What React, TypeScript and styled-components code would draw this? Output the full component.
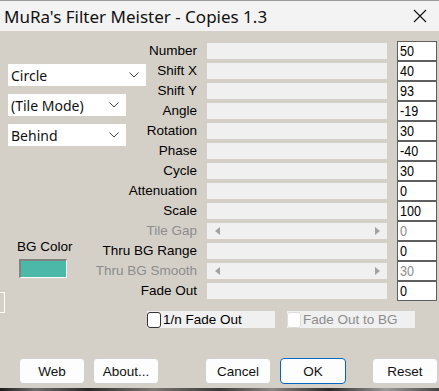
import React from "react";
import styled, { createGlobalStyle } from "styled-components";

const Global = createGlobalStyle`
  html, body { margin: 0; padding: 0; background: #d4d0c8; }
  body { font-family: "Liberation Sans", Arial, sans-serif; }
  * { box-sizing: border-box; }
`;

const Window = styled.div`
  width: 439px;
  height: 391px;
  overflow: hidden;
  display: flex;
  flex-direction: column;
  background: #d4d0c8;
`;

const TitleBar = styled.div`
  height: 31px;
  flex: none;
  background: #f3f3f3;
  display: flex;
  align-items: center;
  justify-content: space-between;
  padding: 0 12px 0 4px;
  border-top: 1px solid #9a9a9a;
`;

const Title = styled.div`
  font-family: "Noto Sans", "Open Sans", sans-serif;
  font-size: 17px;
  color: #111;
`;

const Body = styled.div`
  flex: 1;
  display: flex;
  flex-direction: column;
  padding-top: 10px;
`;

const MainGrid = styled.div`
  display: grid;
  grid-template-columns: 197px 180px 40px;
  grid-template-rows: repeat(13, 20px);
  column-gap: 10px;
`;

const LeftPanel = styled.div`
  grid-column: 1;
  grid-row: 1 / span 13;
  justify-self: start;
  align-self: start;
  display: flex;
  flex-direction: column;
  padding: 23px 0 0 8px;
  & > * { flex-shrink: 0; }
`;

const SelectBox = styled.div<{ $w: number }>`
  width: ${(p) => p.$w}px;
  height: 22px;
  margin-bottom: 8px;
  background: #ffffff;
  display: flex;
  align-items: center;
  justify-content: space-between;
  padding: 0 7px 0 3px;
  font-family: "Noto Sans", "Open Sans", sans-serif;
  font-size: 14px;
  color: #111;
`;

const Chevron = () => (
  <svg width="10" height="6" viewBox="0 0 10 6">
    <path d="M0.5 0.5 L5 5 L9.5 0.5" fill="none" stroke="#444" strokeWidth="1" />
  </svg>
);

const BgColorLabel = styled.div`
  margin: 85px 0 0 9px;
  font-size: 13.5px;
  color: #000;
  line-height: 16px;
`;

const Swatch = styled.div<{ $color: string }>`
  margin: 4px 0 0 11px;
  width: 48px;
  height: 19px;
  background: ${(p) => p.$color};
  border-top: 2px solid #7f8482;
  border-left: 2px solid #7f8482;
  border-right: 1px solid #ffffff;
  border-bottom: 1px solid #ffffff;
`;

const ClippedControl = styled.div`
  margin: 14px 0 0 -10px;
  width: 7px;
  height: 21px;
  border: 1px solid #ffffff;
  border-left: none;
`;

const Label = styled.div<{ $disabled?: boolean; $row: number }>`
  grid-column: 1;
  grid-row: ${(p) => p.$row};
  justify-self: end;
  align-self: center;
  white-space: nowrap;
  font-size: 13.5px;
  line-height: 16px;
  color: ${(p) => (p.$disabled ? "#8c8c8c" : "#000")};
`;

const Track = styled.div<{ $row: number }>`
  grid-column: 2;
  grid-row: ${(p) => p.$row};
  height: 16px;
  align-self: center;
  background: #f0f0f0;
  display: flex;
  align-items: center;
  justify-content: space-between;
  padding: 0 7px 0 8px;
`;

const ArrowL = () => (
  <svg width="5" height="8" viewBox="0 0 5 8">
    <path d="M5 0 L0 4 L5 8 Z" fill="#a2a2a2" />
  </svg>
);
const ArrowR = () => (
  <svg width="5" height="8" viewBox="0 0 5 8">
    <path d="M0 0 L5 4 L0 8 Z" fill="#a2a2a2" />
  </svg>
);

const ValueBox = styled.div<{ $disabled?: boolean; $row: number }>`
  grid-column: 3;
  grid-row: ${(p) => p.$row};
  height: 20px;
  background: #ffffff;
  border: 1px solid #5f5f5f;
  padding: 1px 0 0 2px;
  font-size: 14px;
  line-height: 17px;
  color: ${(p) => (p.$disabled ? "#8c8c8c" : "#000")};
`;

const ValueText = styled.span`
  display: inline-block;
  transform: scaleX(0.9);
  transform-origin: left;
`;

const CheckRow = styled.div`
  display: flex;
  gap: 12px;
  padding-left: 147px;
  margin-top: 10px;
`;

const CheckItem = styled.div<{ $disabled?: boolean }>`
  width: 128px;
  height: 17px;
  background: #f0f0f0;
  display: flex;
  align-items: center;
  gap: 2px;
  font-size: 13.5px;
  color: ${(p) => (p.$disabled ? "#8c8c8c" : "#000")};
`;

const CheckSquare = styled.div<{ $disabled?: boolean }>`
  width: 14px;
  height: 16px;
  border-radius: 3px;
  background: #fff;
  border: 1px solid ${(p) => (p.$disabled ? "#dcdcdc" : "#333")};
`;

const ButtonRow = styled.div`
  display: flex;
  padding-left: 19px;
  margin-top: 30px;
`;

const Btn = styled.div<{ $ml?: number; $primary?: boolean }>`
  margin-left: ${(p) => p.$ml ?? 0}px;
  width: 66px;
  height: 26px;
  border-radius: 4px;
  background: #fdfdfd;
  border: 1px solid ${(p) => (p.$primary ? "#0067c0" : "#d0d0d0")};
  display: flex;
  align-items: center;
  justify-content: center;
  font-size: 13.5px;
  color: #111;
`;

const Desktop = styled.div`
  margin-top: auto;
  height: 3px;
  background: linear-gradient(90deg, #1c1c1c 0%, #6b6b6b 8%, #2a2a2a 20%, #7a7670 35%, #3a3a3a 50%, #8a8580 62%, #2b2b2b 75%, #9a9a9a 88%, #444 100%);
`;

const rows: { label: string; value: string; disabled?: boolean }[] = [
  { label: "Number", value: "50" },
  { label: "Shift X", value: "40" },
  { label: "Shift Y", value: "93" },
  { label: "Angle", value: "-19" },
  { label: "Rotation", value: "30" },
  { label: "Phase", value: "-40" },
  { label: "Cycle", value: "30" },
  { label: "Attenuation", value: "0" },
  { label: "Scale", value: "100" },
  { label: "Tile Gap", value: "0", disabled: true },
  { label: "Thru BG Range", value: "0" },
  { label: "Thru BG Smooth", value: "30", disabled: true },
  { label: "Fade Out", value: "0" },
];

export default function App() {
  return (
    <Window>
      <Global />
      <TitleBar>
        <Title>MuRa's Filter Meister - Copies 1.3</Title>
        <svg width="14" height="14" viewBox="0 0 14 14">
          <path d="M1 1 L13 13 M13 1 L1 13" stroke="#111" strokeWidth="1.1" />
        </svg>
      </TitleBar>
      <Body>
        <MainGrid>
          <LeftPanel>
            <SelectBox $w={138}>
              Circle
              <Chevron />
            </SelectBox>
            <SelectBox $w={118}>
              (Tile Mode)
              <Chevron />
            </SelectBox>
            <SelectBox $w={118}>
              Behind
              <Chevron />
            </SelectBox>
            <BgColorLabel>BG Color</BgColorLabel>
            <Swatch $color="#4cb9a8" />
            <ClippedControl />
          </LeftPanel>
          {rows.map((r, i) => (
            <React.Fragment key={r.label}>
              <Label $row={i + 1} $disabled={r.disabled}>{r.label}</Label>
              <Track $row={i + 1}>
                {r.disabled && (
                  <>
                    <ArrowL />
                    <ArrowR />
                  </>
                )}
              </Track>
              <ValueBox $row={i + 1} $disabled={r.disabled}>
                <ValueText>{r.value}</ValueText>
              </ValueBox>
            </React.Fragment>
          ))}
        </MainGrid>
        <CheckRow>
          <CheckItem>
            <CheckSquare />
            1/n Fade Out
          </CheckItem>
          <CheckItem $disabled>
            <CheckSquare $disabled />
            Fade Out to BG
          </CheckItem>
        </CheckRow>
        <ButtonRow>
          <Btn>Web</Btn>
          <Btn $ml={8}>About...</Btn>
          <Btn $ml={46}>Cancel</Btn>
          <Btn $ml={9} $primary>OK</Btn>
          <Btn $ml={26}>Reset</Btn>
        </ButtonRow>
        <Desktop />
      </Body>
    </Window>
  );
}
